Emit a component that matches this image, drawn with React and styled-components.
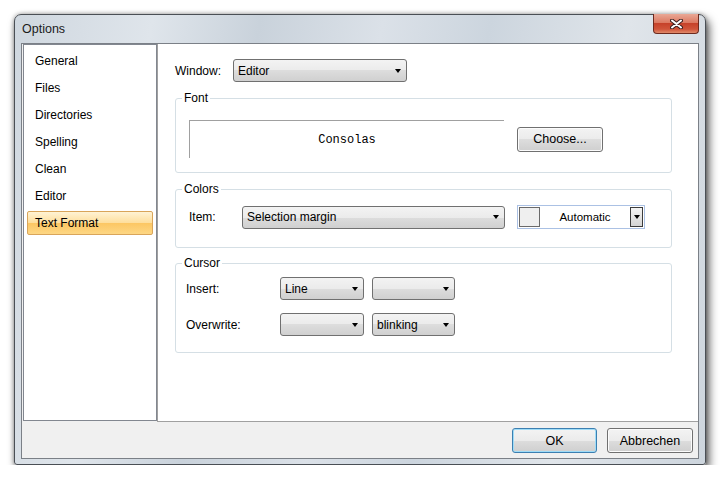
import React from "react";
import styled, { createGlobalStyle } from "styled-components";

const GlobalStyle = createGlobalStyle`
  html, body {
    margin: 0;
    background: #ffffff;
  }
  body {
    font-family: "Liberation Sans", Arial, sans-serif;
    font-size: 12px;
    color: #000;
  }
`;

const Page = styled.div`
  padding: 14px 0 0 14px;
`;

const Window = styled.div`
  position: relative;
  width: 692px;
  height: 451px;
  box-sizing: border-box;
  border: 1px solid #4a4f55;
  border-radius: 7px 7px 3px 3px;
  padding: 0 6px 5px 6px;
  display: flex;
  flex-direction: column;
  background: linear-gradient(
    100deg,
    #cfd7df 0%,
    #dfe5eb 18%,
    #c9d2db 32%,
    #dbe1e8 48%,
    #ccd5de 62%,
    #e0e5ea 80%,
    #cdd5dd 100%
  );
  box-shadow: 3px 5px 10px rgba(0, 0, 0, 0.65), 0 0 4px rgba(0, 0, 0, 0.35);
`;

const TitleBar = styled.div`
  height: 28px;
  display: flex;
  align-items: center;
  padding-left: 1px;
  font-size: 12.5px;
  color: #1b1b1b;
`;

const CloseButton = styled.div`
  position: absolute;
  top: -1px;
  right: 6px;
  width: 46px;
  height: 20px;
  box-sizing: border-box;
  border: 1px solid #6d2a1e;
  border-top: none;
  border-radius: 0 0 4px 4px;
  display: flex;
  align-items: center;
  justify-content: center;
  background: linear-gradient(
    180deg,
    #e9a896 0%,
    #dc7a62 45%,
    #c6422a 50%,
    #d0553a 80%,
    #e08a6a 100%
  );
`;

const Client = styled.div`
  flex: 1;
  border: 1px solid #7b8087;
  background: #f0f0f0;
  display: flex;
  flex-direction: column;
`;

const Body = styled.div`
  height: 378px;
  display: flex;
`;

const NavList = styled.div`
  margin-left: 1px;
  width: 134px;
  height: 377px;
  box-sizing: border-box;
  border: 1px solid #828790;
  background: #fff;
  padding: 4px 3px 0 3px;
  display: flex;
  flex-direction: column;
  gap: 3px;
`;

const NavItem = styled.div`
  height: 24px;
  box-sizing: border-box;
  display: flex;
  align-items: center;
  padding-left: 7px;
  border: 1px solid ${(p) => (p.$active ? "#d9a55a" : "transparent")};
  border-radius: 2px;
  background: ${(p) =>
    p.$active
      ? "linear-gradient(180deg, #fff3d4 0%, #fedf9e 48%, #fcc764 52%, #fdd784 100%)"
      : "transparent"};
`;

const Main = styled.div`
  flex: 1;
  background: #fff;
  border-left: 1px solid #a0a0a0;
  border-bottom: 1px solid #a0a0a0;
  padding: 15px 26px 0 17px;
  display: flex;
  flex-direction: column;
`;

const Row = styled.div`
  display: flex;
  align-items: center;
`;

const Label = styled.div`
  width: ${(p) => p.$w}px;
  flex-shrink: 0;
`;

const Combo = styled.div`
  width: ${(p) => p.$w}px;
  height: 23px;
  box-sizing: border-box;
  border: 1px solid #707070;
  border-radius: 3px;
  background: linear-gradient(180deg, #f3f3f3 0%, #ebebeb 50%, #dddddd 50%, #d0d0d0 100%);
  display: flex;
  align-items: center;
  padding: 0 5px 0 4px;
  margin-right: ${(p) => p.$mr || 0}px;
`;

const ComboText = styled.span`
  flex: 1;
`;

const Arrow = styled.span`
  width: 0;
  height: 0;
  border-left: 3.5px solid transparent;
  border-right: 3.5px solid transparent;
  border-top: 4px solid #000;
`;

const Group = styled.div`
  position: relative;
  height: ${(p) => p.$h}px;
  box-sizing: border-box;
  margin-top: ${(p) => p.$mt}px;
  border: 1px solid #d5dfe5;
  border-radius: 3px;
  padding: ${(p) => p.$pad};
`;

const Legend = styled.span`
  position: absolute;
  top: -8px;
  left: 6px;
  padding: 0 2px;
  background: #fff;
`;

const Preview = styled.div`
  width: 315px;
  height: 38px;
  box-sizing: border-box;
  border-top: 1px solid #a0a0a0;
  border-left: 1px solid #a0a0a0;
  display: flex;
  align-items: center;
  justify-content: center;
  font-family: "Liberation Mono", "DejaVu Sans Mono", monospace;
  font-size: 12px;
  margin-right: 13px;
`;

const Button = styled.div`
  width: ${(p) => p.$w}px;
  height: 25px;
  box-sizing: border-box;
  border: 1px solid ${(p) => (p.$default ? "#3c7fb1" : "#707070")};
  border-radius: 3px;
  background: linear-gradient(180deg, #f3f3f3 0%, #ebebeb 50%, #dddddd 50%, #cfcfcf 100%);
  box-shadow: ${(p) => (p.$default ? "inset 0 0 0 1px #9fdcf7" : "inset 0 0 0 1px #fcfcfc")};
  display: flex;
  align-items: center;
  justify-content: center;
  font-size: 12.5px;
`;

const ColorPicker = styled.div`
  width: 128px;
  height: 24px;
  box-sizing: border-box;
  margin-left: 12px;
  border: 1px solid #abc1e4;
  background: #fff;
  padding: 1px;
  display: flex;
  align-items: stretch;
`;

const Swatch = styled.div`
  width: 21px;
  box-sizing: border-box;
  border: 1px solid #6a6a6a;
  background: #efefef;
`;

const PickerText = styled.div`
  flex: 1;
  display: flex;
  align-items: center;
  justify-content: center;
  font-size: 11.5px;
`;

const DropBtn = styled.div`
  width: 13px;
  box-sizing: border-box;
  border: 1px solid #3c3c3c;
  background: linear-gradient(180deg, #f4f4f4 0%, #e4e4e4 50%, #d4d4d4 100%);
  display: flex;
  align-items: flex-start;
  justify-content: center;
  padding-top: 7px;
`;

const CursorRows = styled.div`
  display: flex;
  flex-direction: column;
  gap: 13px;
`;

const Footer = styled.div`
  flex: 1;
  display: flex;
  justify-content: flex-end;
  align-items: flex-start;
  gap: 10px;
  padding: 6px 5px 0 0;
`;

const navItems = ["General", "Files", "Directories", "Spelling", "Clean", "Editor", "Text Format"];

export default function App() {
  return (
    <>
      <GlobalStyle />
      <Page>
        <Window>
          <TitleBar>Options</TitleBar>
          <CloseButton>
            <svg width="13" height="10" viewBox="0 0 13 10">
              <path d="M2 1.5 L11 8.5 M11 1.5 L2 8.5" stroke="#3b2020" strokeWidth="4" strokeLinecap="round" />
              <path d="M2 1.5 L11 8.5 M11 1.5 L2 8.5" stroke="#ffffff" strokeWidth="2" strokeLinecap="round" />
            </svg>
          </CloseButton>
          <Client>
            <Body>
              <NavList>
                {navItems.map((n) => (
                  <NavItem key={n} $active={n === "Text Format"}>{n}</NavItem>
                ))}
              </NavList>
              <Main>
                <Row>
                  <Label $w={58}>Window:</Label>
                  <Combo $w={174}>
                    <ComboText>Editor</ComboText>
                    <Arrow />
                  </Combo>
                </Row>

                <Group $h={75} $mt={16} $pad="21px 0 0 13px">
                  <Legend>Font</Legend>
                  <Row>
                    <Preview>Consolas</Preview>
                    <Button $w={86}>Choose...</Button>
                  </Row>
                </Group>

                <Group $h={59} $mt={16} $pad="15px 0 0 13px">
                  <Legend>Colors</Legend>
                  <Row>
                    <Label $w={53}>Item:</Label>
                    <Combo $w={263}>
                      <ComboText>Selection margin</ComboText>
                      <Arrow />
                    </Combo>
                    <ColorPicker>
                      <Swatch />
                      <PickerText>Automatic</PickerText>
                      <DropBtn><Arrow /></DropBtn>
                    </ColorPicker>
                  </Row>
                </Group>

                <Group $h={90} $mt={15} $pad="13px 0 0 10px">
                  <Legend>Cursor</Legend>
                  <CursorRows>
                    <Row>
                      <Label $w={94}>Insert:</Label>
                      <Combo $w={84} $mr={8}>
                        <ComboText>Line</ComboText>
                        <Arrow />
                      </Combo>
                      <Combo $w={83}>
                        <ComboText />
                        <Arrow />
                      </Combo>
                    </Row>
                    <Row>
                      <Label $w={94}>Overwrite:</Label>
                      <Combo $w={84} $mr={8}>
                        <ComboText />
                        <Arrow />
                      </Combo>
                      <Combo $w={83}>
                        <ComboText>blinking</ComboText>
                        <Arrow />
                      </Combo>
                    </Row>
                  </CursorRows>
                </Group>
              </Main>
            </Body>
            <Footer>
              <Button $w={85} $default>OK</Button>
              <Button $w={86}>Abbrechen</Button>
            </Footer>
          </Client>
        </Window>
      </Page>
    </>
  );
}
